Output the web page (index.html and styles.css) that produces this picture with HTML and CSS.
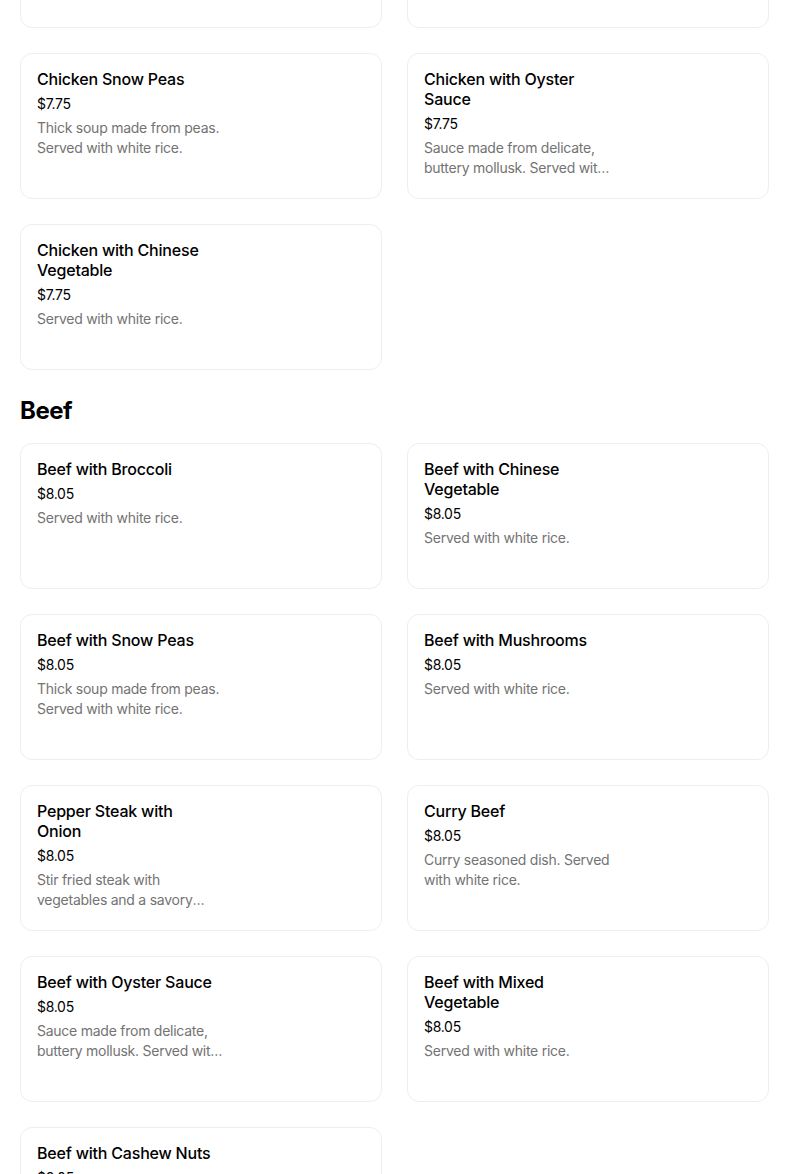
FILE: index.html
```html
<!DOCTYPE html>
<html lang="en">
<head>
<meta charset="utf-8">
<title>Menu</title>
<link rel="stylesheet" href="styles.css">
</head>
<body>
<main class="menu">
  <section class="section section-first">
    <div class="grid">
      <div class="card"><div class="info"><h3 class="name">Chicken with Broccoli</h3><div class="price">$7.75</div><p class="desc">Served with white rice.</p></div></div>
      <div class="card"><div class="info"><h3 class="name">Chicken with Mushrooms</h3><div class="price">$7.75</div><p class="desc">Served with white rice.</p></div></div>
      <div class="card"><div class="info"><h3 class="name">Chicken Snow Peas</h3><div class="price">$7.75</div><p class="desc">Thick soup made from peas. Served with white rice.</p></div></div>
      <div class="card"><div class="info"><h3 class="name">Chicken with Oyster Sauce</h3><div class="price">$7.75</div><p class="desc">Sauce made from delicate, buttery mollusk. Served with white rice.</p></div></div>
      <div class="card"><div class="info"><h3 class="name">Chicken with Chinese Vegetable</h3><div class="price">$7.75</div><p class="desc">Served with white rice.</p></div></div>
    </div>
  </section>
  <section class="section">
    <h2 class="section-title">Beef</h2>
    <div class="grid">
      <div class="card"><div class="info"><h3 class="name">Beef with Broccoli</h3><div class="price">$8.05</div><p class="desc">Served with white rice.</p></div></div>
      <div class="card"><div class="info"><h3 class="name">Beef with Chinese Vegetable</h3><div class="price">$8.05</div><p class="desc">Served with white rice.</p></div></div>
      <div class="card"><div class="info"><h3 class="name">Beef with Snow Peas</h3><div class="price">$8.05</div><p class="desc">Thick soup made from peas. Served with white rice.</p></div></div>
      <div class="card"><div class="info"><h3 class="name">Beef with Mushrooms</h3><div class="price">$8.05</div><p class="desc">Served with white rice.</p></div></div>
      <div class="card"><div class="info"><h3 class="name">Pepper Steak with Onion</h3><div class="price">$8.05</div><p class="desc">Stir fried steak with vegetables and a savory sauce. Served with white rice.</p></div></div>
      <div class="card"><div class="info"><h3 class="name">Curry Beef</h3><div class="price">$8.05</div><p class="desc">Curry seasoned dish. Served with white rice.</p></div></div>
      <div class="card"><div class="info"><h3 class="name">Beef with Oyster Sauce</h3><div class="price">$8.05</div><p class="desc">Sauce made from delicate, buttery mollusk. Served with white rice.</p></div></div>
      <div class="card"><div class="info"><h3 class="name">Beef with Mixed Vegetable</h3><div class="price">$8.05</div><p class="desc">Served with white rice.</p></div></div>
      <div class="card"><div class="info"><h3 class="name">Beef with Cashew Nuts</h3><div class="price">$8.05</div><p class="desc">Served with white rice.</p></div></div>
    </div>
  </section>
</main>
</body>
</html>
```
FILE: styles.css
```css
html, body {
  margin: 0;
  padding: 0;
  background: #ffffff;
}
body {
  font-family: "Inter", "Noto Sans", "Liberation Sans", sans-serif;
  color: #000000;
  overflow: hidden;
}
.menu {
  padding: 0 35px 40px 20px;
  margin-top: -118px;
}
.section-first {
  margin-bottom: 25px;
}
.section-title {
  margin: 0 0 16px 0;
  font-size: 24px;
  line-height: 32px;
  font-weight: 700;
  letter-spacing: -0.5px;
}
.grid {
  display: grid;
  grid-template-columns: repeat(2, 362px);
  column-gap: 25px;
  row-gap: 25px;
}
.card {
  box-sizing: border-box;
  height: 146px;
  border: 1px solid #eeeeee;
  border-radius: 12px;
  padding: 15px 16px 16px 16px;
  background: #ffffff;
}
.info {
  width: 188px;
}
.name {
  margin: 0;
  max-width: 180px;
  font-size: 16px;
  line-height: 20px;
  font-weight: 500;
  letter-spacing: -0.2px;
  color: #000000;
}
.price {
  margin-top: 5px;
  font-size: 14px;
  line-height: 20px;
  letter-spacing: -0.3px;
  color: #000000;
}
.desc {
  margin: 4px 0 0 0;
  font-size: 14px;
  line-height: 20px;
  letter-spacing: -0.25px;
  color: #737373;
  display: -webkit-box;
  -webkit-line-clamp: 2;
  -webkit-box-orient: vertical;
  overflow: hidden;
}
```
